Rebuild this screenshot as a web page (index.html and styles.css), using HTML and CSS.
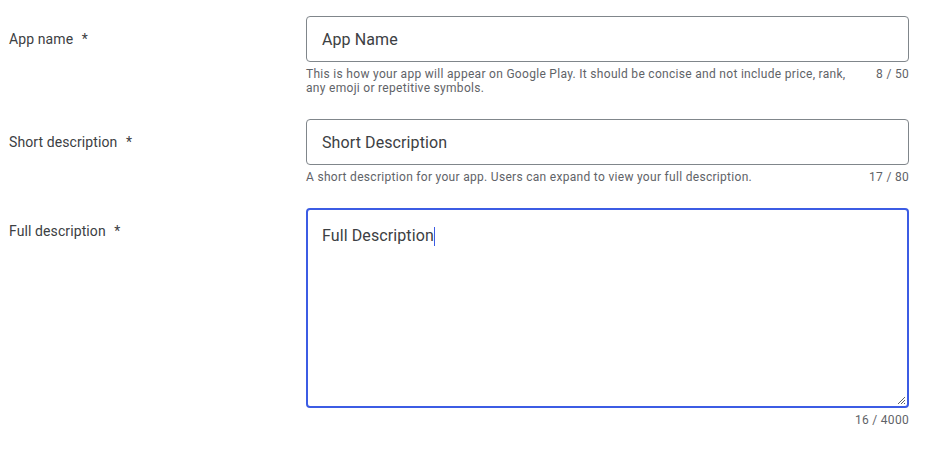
FILE: index.html
```html
<!DOCTYPE html>
<html>
<head>
<meta charset="utf-8">
<link rel="stylesheet" href="styles.css">
</head>
<body>
<div class="form">
  <div class="row">
    <div class="label">App name <span class="req">*</span></div>
    <div class="field">
      <div class="input">App Name</div>
      <div class="help">
        <div class="help-text">This is how your app will appear on Google Play. It should be concise and not include price, rank, any emoji or repetitive symbols.</div>
        <div class="count">8 / 50</div>
      </div>
    </div>
  </div>
  <div class="row">
    <div class="label">Short description <span class="req">*</span></div>
    <div class="field">
      <div class="input">Short Description</div>
      <div class="help">
        <div class="help-text">A short description for your app. Users can expand to view your full description.</div>
        <div class="count">17 / 80</div>
      </div>
    </div>
  </div>
  <div class="row">
    <div class="label label-area">Full description <span class="req">*</span></div>
    <div class="field">
      <div class="textarea"><span class="val">Full Description</span><span class="caret"></span>
        <svg class="grip" width="9" height="9" viewBox="0 0 9 9"><path d="M8 1 L1 8 M8 4 L4 8 M8 7 L7 8" stroke="#5f6368" stroke-width="1" fill="none"/></svg>
      </div>
      <div class="help">
        <div class="help-text"></div>
        <div class="count">16 / 4000</div>
      </div>
    </div>
  </div>
</div>
</body>
</html>
```
FILE: styles.css
```css
html, body {
  margin: 0;
  padding: 0;
  background: #fff;
}
body {
  font-family: Roboto, "Liberation Sans", sans-serif;
  color: #202124;
}
.form {
  display: flex;
  flex-direction: column;
  gap: 24px;
  padding: 16px 30px 0 9px;
}
.row {
  display: grid;
  grid-template-columns: 297px 603px;
}
.label {
  font-size: 14px;
  line-height: 20px;
  color: #3c4043;
  padding-top: 13px;
  letter-spacing: 0.1px;
}
.req {
  margin-left: 5px;
}
.input {
  box-sizing: border-box;
  height: 46px;
  border: 1px solid #80868b;
  border-radius: 4px;
  padding: 0 15px;
  display: flex;
  align-items: center;
  font-size: 16px;
  color: #3c4043;
  letter-spacing: 0.1px;
}
.textarea {
  position: relative;
  box-sizing: border-box;
  height: 200px;
  border: 2px solid #3c5ce4;
  border-radius: 4px;
  padding: 16px 14px 0;
  font-size: 16px;
  line-height: 20px;
  color: #3c4043;
  letter-spacing: 0.1px;
  display: flex;
  align-items: flex-start;
}
.caret {
  display: inline-block;
  width: 1px;
  height: 19px;
  background: #3c5ce4;
  margin-top: 1px;
}
.grip {
  position: absolute;
  right: 1px;
  bottom: 1px;
}
.help {
  display: flex;
  gap: 24px;
  margin-top: 5px;
  font-size: 12px;
  line-height: 14px;
  color: #5f6368;
  letter-spacing: 0.3px;
}
.help-text {
  flex: 1;
}
.count {
  white-space: nowrap;
}
```
